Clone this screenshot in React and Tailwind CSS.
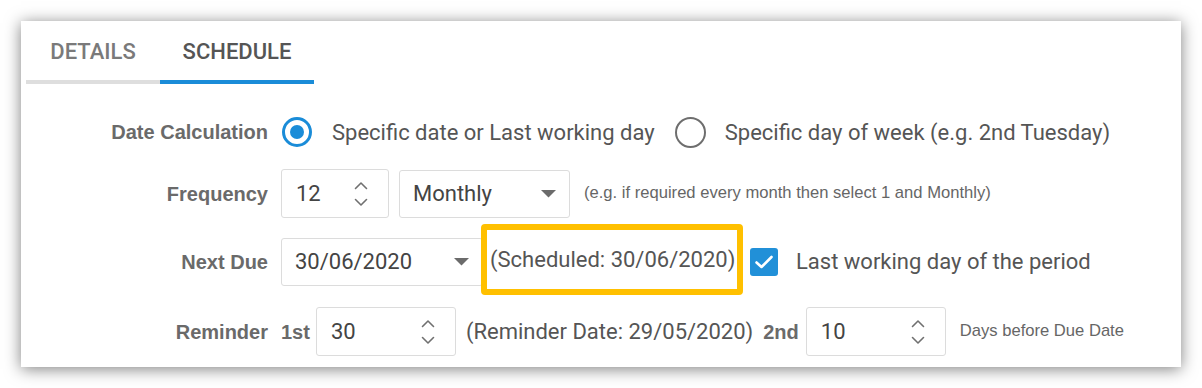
import React from 'react';

const body = { fontFamily: 'Roboto, "Liberation Sans", sans-serif' };
const arial = { fontFamily: '"Liberation Sans", Arial, sans-serif' };

function Spinner() {
  return (
    <svg width="14" height="26" viewBox="0 0 14 26" fill="none" stroke="#707070" strokeWidth="1.6" strokeLinecap="round" strokeLinejoin="round">
      <path d="M1.5 7.5 L7 2 L12.5 7.5" />
      <path d="M1.5 18.5 L7 24 L12.5 18.5" />
    </svg>
  );
}

function Caret() {
  return (
    <svg width="15" height="8" viewBox="0 0 15 8">
      <path d="M0 0 H15 L7.5 7.5 Z" fill="#6b6b6b" />
    </svg>
  );
}

function NumberBox({ value, width }) {
  return (
    <div className={`flex items-center justify-between h-[49px] border border-[#dcdcdc] rounded-[3px] bg-white pl-[14px] pr-[20px] ${width}`}>
      <span className="text-[22px] text-[#444]" style={body}>{value}</span>
      <Spinner />
    </div>
  );
}

function SelectBox({ value, width, className = '' }) {
  return (
    <div className={`flex items-center justify-between h-[48px] border border-[#dcdcdc] rounded-[3px] bg-white pl-[13px] pr-[13px] ${width} ${className}`}>
      <span className="text-[22px] text-[#444]" style={body}>{value}</span>
      <Caret />
    </div>
  );
}

function Label({ children }) {
  return (
    <div className="w-[247px] shrink-0 text-right text-[20px] font-bold text-[#6a6a6a]" style={arial}>
      {children}
    </div>
  );
}

export default function App() {
  return (
    <div className="w-[1202px] h-[388px] bg-white p-[21px]">
      <div className="w-[1160px] h-[346px] bg-white shadow-[0_2px_15px_rgba(0,0,0,0.5)]">
        <div className="flex pl-[5px] h-[63px]">
          <div className="w-[134px] flex items-center justify-center border-b-4 border-[#dedede] pt-[1px] text-[22px] font-medium text-[#7a7a7a]" style={body}>
            DETAILS
          </div>
          <div className="w-[154px] flex items-center justify-center border-b-4 border-[#1a8cd8] pt-[1px] text-[22px] font-medium text-[#555]" style={body}>
            SCHEDULE
          </div>
        </div>

        <div className="flex items-center h-[36px] mt-[30px]">
          <Label>Date Calculation</Label>
          <div className="ml-[14px] w-[30px] h-[30px] rounded-full border-[3px] border-[#1a8cd8] flex items-center justify-center">
            <div className="w-[14px] h-[14px] rounded-full bg-[#1a8cd8]" />
          </div>
          <span className="ml-[20px] text-[22px] text-[#555]" style={body}>Specific date or Last working day</span>
          <div className="ml-[20px] w-[31px] h-[31px] rounded-full border-[2.5px] border-[#6e6e6e]" />
          <span className="ml-[19px] text-[22px] text-[#555]" style={body}>Specific day of week (e.g. 2nd Tuesday)</span>
        </div>

        <div className="flex items-center mt-[19px]">
          <Label>Frequency</Label>
          <div className="ml-[13px]"><NumberBox value="12" width="w-[108px]" /></div>
          <SelectBox value="Monthly" width="w-[171px]" className="ml-[10px]" />
          <span className="ml-[14px] text-[16.6px] text-[#666]" style={arial}>(e.g. if required every month then select 1 and Monthly)</span>
        </div>

        <div className="flex items-center mt-[6px]">
          <Label>Next Due</Label>
          <SelectBox value="30/06/2020" width="w-[202px]" className="ml-[13px] pr-[12px]" />
          <div className="-ml-[2px] mb-[4px] h-[71px] w-[262px] border-[6px] border-[#ffc000] rounded-[4px] flex items-center pl-[3px]">
            <span className="text-[22px] text-[#555]" style={body}>(Scheduled: 30/06/2020)</span>
          </div>
          <div className="ml-[7px] w-[28px] h-[28px] rounded-[3px] bg-[#2190d8] flex items-center justify-center">
            <svg width="20" height="16" viewBox="0 0 20 16" fill="none" stroke="white" strokeWidth="2.6" strokeLinecap="round" strokeLinejoin="round">
              <path d="M2.5 8.5 L7.5 13 L17.5 3" />
            </svg>
          </div>
          <span className="ml-[18px] text-[22px] text-[#555]" style={body}>Last working day of the period</span>
        </div>

        <div className="flex items-center mt-[8px]">
          <Label>Reminder</Label>
          <span className="ml-[13px] text-[20px] font-bold text-[#6a6a6a]" style={arial}>1st</span>
          <div className="ml-[6px]"><NumberBox value="30" width="w-[140px]" /></div>
          <span className="ml-[10px] text-[22px] text-[#555]" style={body}>(Reminder Date: 29/05/2020)</span>
          <span className="ml-[10px] text-[20px] font-bold text-[#6a6a6a]" style={arial}>2nd</span>
          <div className="ml-[7px]"><NumberBox value="10" width="w-[140px]" /></div>
          <span className="ml-[14px] text-[16.6px] text-[#666]" style={arial}>Days before Due Date</span>
        </div>
      </div>
    </div>
  );
}
